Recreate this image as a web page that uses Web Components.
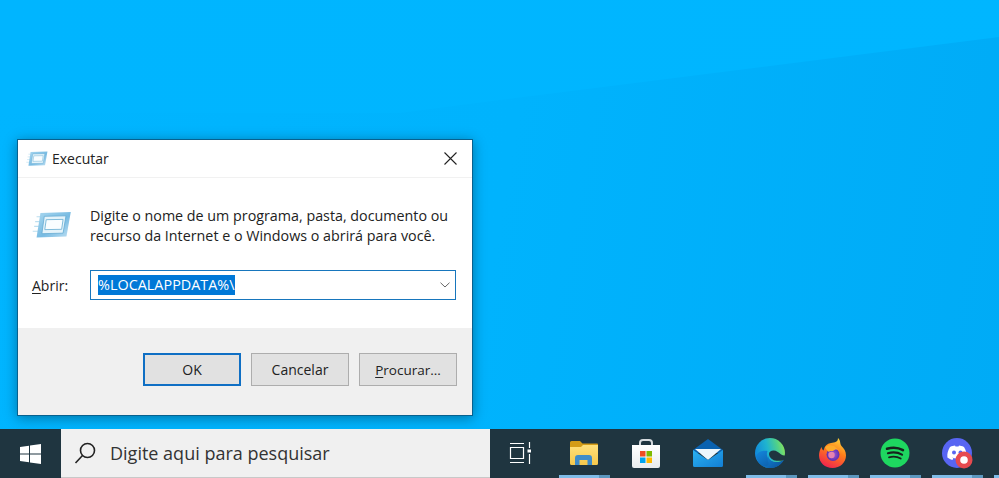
<!DOCTYPE html>
<html lang="pt-BR"><head><meta charset="utf-8"><title>Executar</title>
<style>
html,body{margin:0;height:100%;overflow:hidden}
body{font-family:"Open Sans","Noto Sans",sans-serif;display:flex;flex-direction:column;width:999px;height:478px}
</style></head><body>
<win-desktop>
  <run-dialog></run-dialog>
</win-desktop>
<win-taskbar>
  <task-slot slot="apps" wide><svg width="24" height="24" viewBox="0 0 24 24" fill="none" stroke="#fff" stroke-width="1.2"><path d="M1 2.500h14M1 21.500h14M1.500 6.500h13v11h-13zM20.500 1v6M20.500 13v10"/><rect x="18.500" y="8.500" width="3.500" height="3" fill="#fff" stroke="none"/></svg></task-slot>
  <task-slot slot="apps" running><svg width="28" height="25" viewBox="0 0 28 25"><defs><linearGradient id="x1" x1="0" y1="0" x2="0" y2="1"><stop offset="0" stop-color="#ffe07a"/><stop offset="1" stop-color="#f5c84c"/></linearGradient></defs><path d="M0 2.500A1.500 1.500 0 0 1 1.500 1H10l2.500 2.500H27a1 1 0 0 1 1 1V9H0z" fill="#d49c17"/><path d="M0 7h11l2-2h15v18.500a1.500 1.500 0 0 1-1.500 1.500h-25A1.500 1.500 0 0 1 0 23.500z" fill="url(#x1)"/><path d="M5 25v-7a3 3 0 0 1 3-3h11a3 3 0 0 1 3 3v7h-4.500v-5h-8v5z" fill="#3f8cc9"/></svg></task-slot>
  <task-slot slot="apps"><svg width="30" height="32" viewBox="0 0 30 32"><defs><linearGradient id="s1" x1="0" y1="0" x2="0" y2="1"><stop offset="0" stop-color="#fff"/><stop offset="1" stop-color="#e9ecee"/></linearGradient></defs><path d="M9 11V6a3 3 0 0 1 3-3h6a3 3 0 0 1 3 3v5" fill="none" stroke="#d5dade" stroke-width="2"/><path d="M1 8h28v21a2 2 0 0 1-2 2H3a2 2 0 0 1-2-2z" fill="url(#s1)"/><rect x="9" y="14" width="5.500" height="5.500" fill="#ef4d25"/><rect x="15.500" y="14" width="5.500" height="5.500" fill="#7fba00"/><rect x="9" y="20.500" width="5.500" height="5.500" fill="#00a4ef"/><rect x="15.500" y="20.500" width="5.500" height="5.500" fill="#ffb900"/></svg></task-slot>
  <task-slot slot="apps"><svg width="32" height="32" viewBox="0 0 32 32"><defs><linearGradient id="m1" x1="0" y1="0" x2="1" y2="1"><stop offset="0" stop-color="#2bb2f2"/><stop offset="1" stop-color="#127fd6"/></linearGradient></defs><path d="M1 13 16 2l15 11v3H1z" fill="#0a62b0"/><path d="M3 12h26L16 23z" fill="#eef7fc"/><path d="M1 13l15 10 15-10v15.500a1.500 1.500 0 0 1-1.500 1.500h-27A1.500 1.500 0 0 1 1 28.500z" fill="url(#m1)"/></svg></task-slot>
  <task-slot slot="apps" running><svg width="32" height="32" viewBox="0 0 32 32"><defs><linearGradient id="e1" x1="0" y1="0.6" x2="1" y2="0.35"><stop offset="0" stop-color="#0f86dc"/><stop offset=".45" stop-color="#1fb4cf"/><stop offset=".78" stop-color="#4fd08a"/><stop offset="1" stop-color="#86e25e"/></linearGradient><linearGradient id="e2" x1="0" y1="0" x2="1" y2="1"><stop offset="0" stop-color="#1388de"/><stop offset="1" stop-color="#0b4f98"/></linearGradient></defs><circle cx="16" cy="16" r="15" fill="url(#e1)"/><path d="M2 19C3 26 9 31 16 31c6 0 11.500-3.500 14-8.500-4 3-9.500 3.300-13 1.300-4-2.300-5-6-3.500-9.800C8 13 3.500 15 2 19z" fill="url(#e2)"/><path d="M15 17c0-2 2-3.500 4.500-3.500 3 0 5 2 7 3.500 1.500 1 3 1.500 5 1.500l-1 4.500c-4 1-7 1-9.500.5-3-.7-6-3.500-6-6.500z" fill="#1f3540"/><path d="M14 16.500c-.3 4 2 7.500 6 8.800 3.500 1 7 .5 10-2.800-2.500 5.300-8 8.500-14 8.500-3 0-5-1-6-2 4 .5 5-1.500 4.500-3.500-1-2-1-5-.5-9z" fill="url(#e2)"/></svg></task-slot>
  <task-slot slot="apps" running><svg width="32" height="32" viewBox="0 0 32 32"><defs><linearGradient id="f1" x1="0.8" y1="0" x2="0.35" y2="1"><stop offset="0" stop-color="#ffd83c"/><stop offset=".45" stop-color="#ff7d1a"/><stop offset="1" stop-color="#f0254e"/></linearGradient><radialGradient id="f2" cx=".5" cy=".5" r=".5"><stop offset="0" stop-color="#a45cd8"/><stop offset="1" stop-color="#5c2fb0"/></radialGradient></defs><path d="M22 1c3 3 1.500 5 3.500 8 2.500 2.500 4.500 5 4.500 9.500C30 25.500 24 31 16.500 31S3 25.500 3 18.500c0-3 1-6 2.500-8.500.5 2 1 3 2 3.500C8.500 9 11 6.500 15 6c4-.5 7-1 7-5z" fill="url(#f1)"/><circle cx="17" cy="17.500" r="6.500" fill="url(#f2)"/><circle cx="15.500" cy="18" r="3.200" fill="#e582b0"/><path d="M9 10c3-2 6-2.500 9-1l5 4c-3-1-5 0-6 1-2 0-3-.5-4 1-1-1-3.500-2.500-4-5z" fill="#ffab2b"/></svg></task-slot>
  <task-slot slot="apps" running><svg width="30" height="30" viewBox="0 0 30 30"><circle cx="15" cy="15" r="14.500" fill="#1ed760"/><g fill="none" stroke="#17231d" stroke-linecap="round"><path d="M7 10.800c5-1.500 11.500-1.200 16 1.400" stroke-width="2.500"/><path d="M8 15.200c4.500-1.200 10-.8 14 1.400" stroke-width="2.200"/><path d="M9 19.300c3.800-1 8.300-.7 11.700 1.200" stroke-width="1.800"/></g></svg></task-slot>
  <task-slot slot="apps" running><svg width="30" height="30" viewBox="0 0 30 30" style="overflow:visible"><circle cx="15" cy="15" r="15" fill="#5865f2"/><path d="M8 9c2-1 3.500-1.400 5-1.500l.5 1.100c1-.1 2-.1 3 0l.5-1.100c1.500.1 3 .5 5 1.500 2 3.200 3 6.500 2.600 10.500-1.600 1.300-3.300 2-5 2.500l-1-1.700c.7-.3 1.300-.6 1.800-1-3.500 1.600-7.300 1.600-10.800 0 .5.400 1.100.700 1.800 1l-1 1.700c-1.700-.5-3.400-1.200-5-2.500C5 15.500 6 12.200 8 9z" fill="#fff"/><circle cx="12" cy="14.500" r="2" fill="#5865f2"/><circle cx="18.500" cy="14.500" r="2" fill="#5865f2"/><circle cx="22" cy="22" r="8.500" fill="#e64a4f"/><circle cx="22" cy="22" r="3.800" fill="#fff"/></svg></task-slot>
  <task-slot slot="apps" running></task-slot>
</win-taskbar>

<script>
const def=(name,css,html)=>customElements.define(name,class extends HTMLElement{
  constructor(){super();this.attachShadow({mode:'open'}).innerHTML=`<style>${css}</style>${html}`}
});

def('win-desktop',`
:host{display:block;flex:1;position:relative;overflow:hidden;
  background:linear-gradient(100deg,#00b5ff 0%,#00b3fd 50%,#00abf6 100%)}
.ray{position:absolute;inset:0;background:linear-gradient(100deg,#00b5ff,#00b6ff);clip-path:polygon(0 0,100% 0,100% 37px,500px 100px,400px 113px,0 113px)}
`,`<div class="ray"></div><slot></slot>`);

def('win-button',`
:host{display:block;width:98px;height:33px;box-sizing:border-box;border:1px solid #adadad;background:#e1e1e1;
 color:#222;font-size:14px;display:flex;align-items:center;justify-content:center}
:host([primary]){border:2px solid #0f6fc4}
:host([small]){font-size:13.500px}
`,`<slot></slot>`);

const runIcon=id=>`<svg class="${id}" viewBox="0 0 40 28"><defs><linearGradient id="g${id}" x1="0" y1="0" x2="1" y2="1"><stop offset="0" stop-color="#aad8f0"/><stop offset=".55" stop-color="#78bbe2"/><stop offset="1" stop-color="#bfe0f3"/></linearGradient></defs>
<g stroke="#bcdeef" stroke-width="1.200"><path d="M4 6h6M2.500 11h6M1.500 16h6M0 21h6"/></g>
<path d="M8 2 39.500 1 35 26.500 4 27.500z" fill="url(#g${id})"/>
<path d="M12 5.500 34.500 5 31.500 23 9.500 23.500z" fill="#e4f3fa" stroke="#62a9d2" stroke-width=".8"/>
<path d="M14 9 31.500 8.700 30 19 12.500 19.300z" fill="#f9fdff" stroke="#7cb9da" stroke-width="1"/>
</svg>`;

def('run-dialog',`
:host{position:absolute;left:17px;top:139px;width:456px;height:277px;box-sizing:border-box;border:1px solid #07618f;
 background:#fff;box-shadow:0 2px 12px rgba(0,0,0,.36);display:flex;flex-direction:column;color:#222;font-size:14.300px}
header{height:38px;box-sizing:border-box;flex:none;display:flex;align-items:center;padding:0 15px 0 8px;gap:4px;border-bottom:1px solid #f1f1f1;font-size:14px}
header svg.t{width:22px;height:15px}
header span{flex:1}
main{flex:1;padding:30px 16px 0 14px}
.msg{display:flex;gap:18px;align-items:flex-start}
svg.b{width:40px;height:27px;flex:none;margin-top:3px}
.msg p{margin:-2px 0 0;line-height:20px}
.row{display:flex;align-items:center;margin-top:24px;gap:22px}
.abr{font-size:14px}
u{text-decoration-thickness:1px;text-underline-offset:2px}
.combo{flex:1;height:30px;box-sizing:border-box;border:1px solid #1776bd;display:flex;align-items:center;padding:0 5px 0 7px;background:#fff}
.sel{background:#0078d7;color:#fff;height:20px;line-height:20px;font-size:14.400px;white-space:nowrap}
.combo i{flex:1}
footer{flex:none;height:87px;box-sizing:border-box;background:#f0f0f0;padding:25px 15px 0 0;display:flex;justify-content:flex-end;gap:10px}
`,`<header>${runIcon('t')}<span>Executar</span>
<svg width="13" height="13" viewBox="0 0 13 13" fill="none" stroke="#222" stroke-width="1.100"><path d="M.5.500l12 12M12.500.500l-12 12"/></svg></header>
<main><div class="msg">${runIcon('b')}<p>Digite o nome de um programa, pasta, documento ou<br>recurso da Internet e o Windows o abrirá para você.</p></div>
<div class="row"><span class="abr"><u>A</u>brir:</span><div class="combo"><span class="sel">%LOCALAPPDATA%\\</span><i></i>
<svg width="10" height="6" viewBox="0 0 10 6" fill="none" stroke="#666" stroke-width="1"><path d="M.5.700 5 5 9.500.700"/></svg></div></div></main>
<footer><win-button primary>OK</win-button><win-button>Cancelar</win-button><win-button small><span><u>P</u>rocurar...</span></win-button></footer>`);

def('win-taskbar',`
:host{display:flex;flex:none;height:49px;background:#1f3540;align-items:stretch}
.start{width:61px;display:flex;align-items:center;justify-content:center;padding-right:1px;box-sizing:border-box}
.search{width:429px;background:#f0f0f0;display:flex;align-items:center;gap:13px;padding-left:12px;box-sizing:border-box;color:#333;font-size:18px;border-bottom:1px solid #c8c8c8}
.apps{flex:1;display:flex;min-width:0;overflow:hidden}
`,`<div class="start"><svg width="21" height="20" viewBox="0 0 21 20" fill="#fff"><path d="M0 3 9 1.700V9.500H0zM10 1.500 21 0V9.500H10zM0 10.500H9V18.300L0 17zM10 10.500H21V20L10 18.500z"/></svg></div>
<div class="search"><svg width="24" height="24" viewBox="0 0 24 24" fill="none" stroke="#222" stroke-width="1.600"><circle cx="14.500" cy="9.500" r="7"/><path d="M9.500 14.500 2.500 22"/></svg><span>Digite aqui para pesquisar</span></div>
<div class="apps"><slot name="apps"></slot></div>`);

def('task-slot',`
:host{display:grid;grid-template-rows:1fr 3px;width:62.200px;flex:none;box-sizing:border-box;padding-inline:5.500px}
:host([wide]){width:63.500px}
.i{display:flex;align-items:center;justify-content:center;padding:1px 2px 0 0}
.bar{display:none;background:linear-gradient(90deg,#7fbce8 0 78%,#5c97bf 78% 100%)}
:host([running]) .bar{display:block}
`,`<div class="i"><slot></slot></div><div class="bar"></div>`);
</script>
</body></html>
